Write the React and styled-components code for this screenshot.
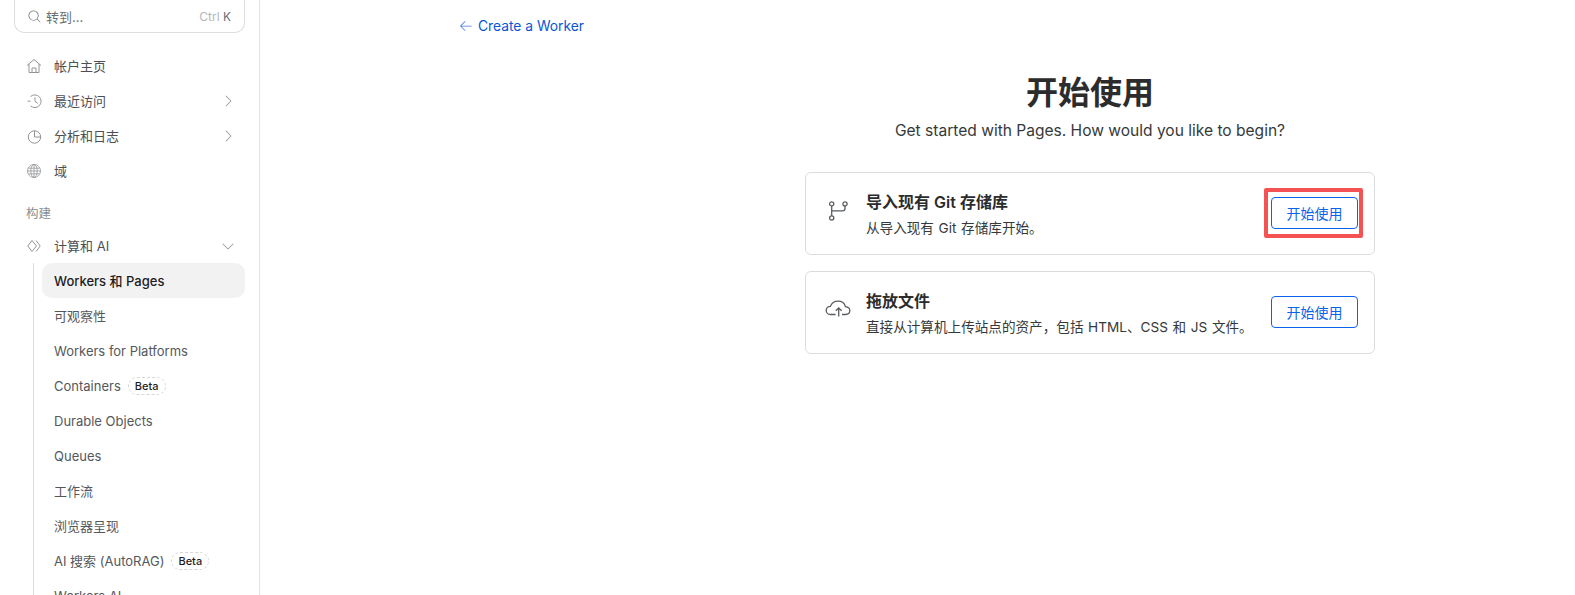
import React from 'react'
import styled, { createGlobalStyle } from 'styled-components'
import {
  PiMagnifyingGlassLight,
  PiCaretRightLight,
  PiCaretDownLight,
  PiArrowLeftLight,
} from 'react-icons/pi'

const Global = createGlobalStyle`
  html, body { margin: 0; height: 100%; background: #fff; }
  body {
    overflow: hidden;
    font-family: Inter, "Noto Sans CJK SC", sans-serif;
    color: #36393a;
  }
`

const Page = styled.div`
  display: flex;
  height: 595px;
  overflow: hidden;
`

const Sidebar = styled.aside`
  flex: 0 0 260px;
  box-sizing: border-box;
  height: 595px;
  overflow: hidden;
  border-right: 1px solid #e3e3e3;
  padding: 0 14px 0 14px;
`

const SearchBox = styled.div`
  display: flex;
  align-items: center;
  box-sizing: border-box;
  height: 33px;
  padding: 0 13px 0 12px;
  border: 1px solid #dedede;
  border-top: 0;
  border-radius: 0 0 10px 10px;
  color: #6b6f72;
  font-size: 13px;
  gap: 4px;
  margin-bottom: 15px;
`

const Shortcut = styled.span`
  margin-left: auto;
  font-size: 12px;
  color: #b5b5b5;
  & b { font-weight: 400; color: #6b6f72; }
`

const NavRow = styled.div`
  display: flex;
  align-items: center;
  height: 35px;
  padding-left: 12px;
  gap: 12px;
  font-size: 13px;
  color: #4d4f52;
  & > svg:first-child { color: #929497; flex: none; }
`

const NavArrow = styled.span`
  margin-left: auto;
  margin-right: 9px;
  display: flex;
  color: #8d8f92;
`

const SectionLabel = styled.div`
  font-size: 12.5px;
  color: #8a8c8f;
  margin: 14px 0 0 12px;
  height: 26px;
  line-height: 24px;
`

const SubNav = styled.div`
  margin-left: 19px;
  padding-left: 8px;
  border-left: 1px solid #dcdcdc;
`

const SubRow = styled.div`
  display: flex;
  align-items: center;
  box-sizing: border-box;
  height: 35px;
  padding-left: 12px;
  gap: 7px;
  font-size: 13px;
  border-radius: 10px;
  color: ${p => (p.$active ? '#1d1d1f' : '#55585a')};
  font-weight: ${p => (p.$active ? 500 : 400)};
  background: ${p => (p.$active ? '#f2f2f2' : 'transparent')};
  white-space: nowrap;
`

const Badge = styled.span`
  border: 1px dashed #d6d6d6;
  border-radius: 10px;
  padding: 0 6px;
  height: 18px;
  line-height: 17px;
  box-sizing: border-box;
  font-size: 11px;
  font-weight: 500;
  color: #1d1d1f;
`

const Main = styled.main`
  flex: 1;
  min-width: 0;
  position: relative;
`

const BackLink = styled.a`
  display: flex;
  align-items: center;
  gap: 4px;
  height: 51px;
  padding-left: 198px;
  color: #0a55d4;
  font-size: 13.8px;
  & svg { color: #3f7be0; }
`

const Content = styled.div`
  width: 570px;
  margin-left: 545px;
  display: flex;
  flex-direction: column;
`

const Title = styled.h1`
  margin: 20px 0 0;
  text-align: center;
  font-size: 32px;
  line-height: 44px;
  font-weight: 700;
  color: #2c2c2c;
`

const Subtitle = styled.p`
  margin: 4px 0 29px;
  text-align: center;
  font-size: 15.55px;
  line-height: 24px;
  color: #36393a;
`

const Card = styled.div`
  position: relative;
  display: flex;
  align-items: center;
  box-sizing: border-box;
  height: 83px;
  margin-bottom: 16px;
  padding: 0 16px 0 19px;
  border: 1px solid #dcdcdc;
  border-radius: 6px;
`

const CardIcon = styled.div`
  display: flex;
  width: 26px;
  margin-right: 15px;
  color: #5a5d60;
`

const CardText = styled.div`
  display: flex;
  flex-direction: column;
  gap: 4px;
`

const CardTitle = styled.div`
  font-size: 16px;
  font-weight: 600;
  line-height: 24px;
  color: #2c2c2c;
`

const CardDesc = styled.div`
  font-size: 13.6px;
  line-height: 20px;
  word-spacing: 0.8px;
  color: #36393a;
`

const StartButton = styled.button`
  position: relative;
  margin-left: auto;
  margin-bottom: 2px;
  width: 87px;
  height: 32px;
  padding: 0;
  background: #fff;
  border: 1px solid #0a63e8;
  border-radius: 4px;
  color: #0a63e8;
  font: 14px Inter, "Noto Sans CJK SC", sans-serif;
`

const Highlight = styled.span`
  position: absolute;
  left: -8px;
  right: -6px;
  top: -10px;
  bottom: -10px;
  border: 4px solid #f55353;
  border-radius: 2px;
  pointer-events: none;
`

const Line = ({ size = 16, width = 1, children }) => (
  <svg width={size} height={size} viewBox={`0 0 ${size} ${size}`} fill="none" stroke="currentColor" strokeWidth={width}>
    {children}
  </svg>
)

const HomeIcon = () => (
  <Line>
    <path d="M1 7.5 8 1.5 15 7.5" />
    <path d="M3 6V14.5H13V6" />
    <path d="M6 14.5V10H10V14.5" />
  </Line>
)

const RecentIcon = () => (
  <Line>
    <path d="M4.6 3.5A6.3 6.3 0 1 1 4.6 12.9" />
    <path d="M1.6 8.2H4.4" />
    <path d="M9 4.3V8.4L11.8 10.3" />
  </Line>
)

const PieIcon = () => (
  <Line>
    <circle cx="8.5" cy="9" r="6.2" />
    <path d="M8.5 2.8V9H14.7" />
  </Line>
)

const GlobeIcon = () => (
  <Line width={0.8}>
    <circle cx="8" cy="8" r="6.5" />
    <ellipse cx="8" cy="8" rx="3.2" ry="6.5" />
    <path d="M8 1.5V14.5M1.5 8H14.5M2.4 5.2H13.6M2.4 10.8H13.6" />
  </Line>
)

const ComputeIcon = () => (
  <Line>
    <path d="M6 2.5 1.8 8 6 13.5" />
    <path d="M6 2.5 10.5 8 6 13.5" />
    <path d="M10 2.5 14.2 8 10 13.5" />
  </Line>
)

const BranchIcon = () => (
  <Line size={26} width={1.3}>
    <circle cx="6.7" cy="2.9" r="2.1" />
    <circle cx="6.7" cy="17" r="2.1" />
    <circle cx="20" cy="2.9" r="2.1" />
    <path d="M6.7 5V14.9" />
    <path d="M6.7 9.9H17.6C19 9.9 20 8.9 20 7.5V5" />
  </Line>
)

const UploadIcon = () => (
  <Line size={26} width={1.3}>
    <path d="M10.5 14.5H5.5C3 14.5 1.2 12.7 1.2 10.4C1.2 8.2 3 6.4 5.4 6.4C6.5 3.3 9.5 1.2 13 1.2C16.7 1.2 19.6 3.4 20.4 6.6C23 6.9 24.8 8.6 24.8 10.6C24.8 12.8 23 14.5 20.5 14.5H17" />
    <path d="M13.7 16.5V8M10.8 10.8 13.7 8 16.6 10.8" />
  </Line>
)

const topItems = [
  { icon: HomeIcon, label: '帐户主页' },
  { icon: RecentIcon, label: '最近访问', arrow: true },
  { icon: PieIcon, label: '分析和日志', arrow: true },
  { icon: GlobeIcon, label: '域' },
]

const subItems = [
  { label: 'Workers 和 Pages', active: true },
  { label: '可观察性' },
  { label: 'Workers for Platforms' },
  { label: 'Containers', beta: true },
  { label: 'Durable Objects' },
  { label: 'Queues' },
  { label: '工作流' },
  { label: '浏览器呈现' },
  { label: 'AI 搜索 (AutoRAG)', beta: true },
  { label: 'Workers AI' },
]

export default function App() {
  return (
    <Page>
      <Global />
      <Sidebar>
        <SearchBox>
          <PiMagnifyingGlassLight size={15} />
          转到...
          <Shortcut>Ctrl <b>K</b></Shortcut>
        </SearchBox>
        {topItems.map(({ icon: Icon, label, arrow }) => (
          <NavRow key={label}>
            <Icon />
            {label}
            {arrow && <NavArrow><PiCaretRightLight size={16} /></NavArrow>}
          </NavRow>
        ))}
        <SectionLabel>构建</SectionLabel>
        <NavRow>
          <ComputeIcon />
          计算和 AI
          <NavArrow><PiCaretDownLight size={16} /></NavArrow>
        </NavRow>
        <SubNav>
          {subItems.map(item => (
            <SubRow key={item.label} $active={item.active}>
              {item.label}
              {item.beta && <Badge>Beta</Badge>}
            </SubRow>
          ))}
        </SubNav>
      </Sidebar>
      <Main>
        <BackLink>
          <PiArrowLeftLight size={16} />
          Create a Worker
        </BackLink>
        <Content>
          <Title>开始使用</Title>
          <Subtitle>Get started with Pages. How would you like to begin?</Subtitle>
          <Card>
            <CardIcon><BranchIcon /></CardIcon>
            <CardText>
              <CardTitle>导入现有 Git 存储库</CardTitle>
              <CardDesc>从导入现有 Git 存储库开始。</CardDesc>
            </CardText>
            <StartButton>开始使用<Highlight /></StartButton>
          </Card>
          <Card>
            <CardIcon><UploadIcon /></CardIcon>
            <CardText>
              <CardTitle>拖放文件</CardTitle>
              <CardDesc>直接从计算机上传站点的资产，包括 HTML、CSS 和 JS 文件。</CardDesc>
            </CardText>
            <StartButton>开始使用</StartButton>
          </Card>
        </Content>
      </Main>
    </Page>
  )
}
